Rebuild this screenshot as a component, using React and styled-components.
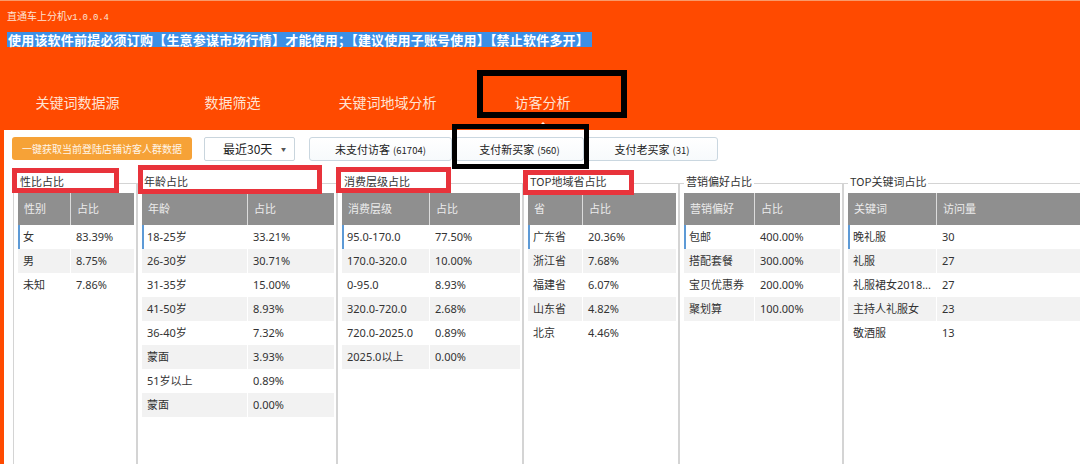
import React from "react";
import styled, { createGlobalStyle } from "styled-components";

const GlobalStyle = createGlobalStyle`
  html, body {
    margin: 0;
    padding: 0;
    overflow: hidden;
    background: #fff;
  }
  body {
    font-family: "Noto Sans", "Noto Sans CJK SC", sans-serif;
  }
`;

const panels = [
  {
    title: "性比占比", width: 124, first: 52, cols: ["性别", "占比"],
    rows: [["女", "83.39%"], ["男", "8.75%"], ["未知", "7.86%"]],
  },
  {
    title: "年龄占比", width: 200, first: 105, cols: ["年龄", "占比"],
    rows: [
      ["18-25岁", "33.21%"], ["26-30岁", "30.71%"], ["31-35岁", "15.00%"],
      ["41-50岁", "8.93%"], ["36-40岁", "7.32%"], ["蒙面", "3.93%"],
      ["51岁以上", "0.89%"], ["蒙面", "0.00%"],
    ],
  },
  {
    title: "消费层级占比", width: 186, first: 87, cols: ["消费层级", "占比"],
    rows: [
      ["95.0-170.0", "77.50%"], ["170.0-320.0", "10.00%"], ["0-95.0", "8.93%"],
      ["320.0-720.0", "2.68%"], ["720.0-2025.0", "0.89%"], ["2025.0以上", "0.00%"],
    ],
  },
  {
    title: "TOP地域省占比", width: 156, first: 54, cols: ["省", "占比"],
    rows: [["广东省", "20.36%"], ["浙江省", "7.68%"], ["福建省", "6.07%"], ["山东省", "4.82%"], ["北京", "4.46%"]],
  },
  {
    title: "营销偏好占比", width: 164, first: 70, cols: ["营销偏好", "占比"],
    rows: [["包邮", "400.00%"], ["搭配套餐", "300.00%"], ["宝贝优惠券", "200.00%"], ["聚划算", "100.00%"]],
  },
  {
    title: "TOP关键词占比", width: 250, first: 88, cols: ["关键词", "访问量"],
    rows: [["晚礼服", "30"], ["礼服", "27"], ["礼服裙女2018...", "27"], ["主持人礼服女", "23"], ["敬酒服", "13"]],
  },
];

const tabs = ["关键词数据源", "数据筛选", "关键词地域分析", "访客分析"];

const buyers = [
  { label: "未支付访客", count: "61704", width: 143, gap: 14 },
  { label: "支付新买家", count: "560", width: 129, gap: 3 },
  { label: "支付老买家", count: "31", width: 132, gap: 2 },
];

// highlight frames drawn over the window
const marks = [
  { color: "#e8333b", w: 5, x: 12, y: 168, width: 107, height: 25, fill: true },
  { color: "#e8333b", w: 5, x: 138, y: 165, width: 184, height: 29, fill: true },
  { color: "#e8333b", w: 5, x: 336, y: 167, width: 115, height: 26, fill: true },
  { color: "#e8333b", w: 5, x: 523, y: 170, width: 111, height: 25, fill: true },
  { color: "#000", w: 6, x: 477, y: 70, width: 150, height: 48 },
  { color: "#000", w: 5, x: 452, y: 124, width: 137, height: 45 },
];

function App() {
  return (
    <>
      <GlobalStyle />
      <Window>
        <Header>
          <AppTitle>
            直通车上分机<Version>v1.0.0.4</Version>
          </AppTitle>
          <NoticeLine>
            <Notice>使用该软件前提必须订购【生意参谋市场行情】才能使用；【建议使用子账号使用】【禁止软件多开】</Notice>
          </NoticeLine>
          <Tabs>
            {tabs.map((t, i) => (
              <Tab key={t} $active={i === 3}>{t}</Tab>
            ))}
          </Tabs>
        </Header>
        <Body>
          <Toolbar>
            <FetchButton>一键获取当前登陆店铺访客人群数据</FetchButton>
            <RangeSelect>
              最近30天<Caret>▼</Caret>
            </RangeSelect>
            {buyers.map((b) => (
              <BuyerButton key={b.label} $width={b.width} $gap={b.gap}>
                {b.label}<Count>({b.count})</Count>
              </BuyerButton>
            ))}
          </Toolbar>
          <Panels>
            {panels.map((p, i) => (
              <Group key={p.title} $width={p.width} $last={i === panels.length - 1}>
                <Legend>{p.title}</Legend>
                <Grid $first={p.first}>
                  {p.cols.map((c, j) => (
                    <HeadCell key={c} $divide={j > 0}>{c}</HeadCell>
                  ))}
                  {p.rows.map((r, ri) =>
                    r.map((v, j) => (
                      <Cell key={ri + "-" + j} $alt={ri % 2 === 1} $divide={j > 0} $current={ri === 0 && j === 0}>
                        {v}
                      </Cell>
                    ))
                  )}
                </Grid>
              </Group>
            ))}
          </Panels>
        </Body>
        {marks.map((m, i) => (
          <Mark
            key={i}
            $color={m.color}
            $w={m.w}
            $fill={m.fill}
            style={{ left: m.x, top: m.y, width: m.width, height: m.height }}
          />
        ))}
      </Window>
    </>
  );
}

const Window = styled.div`
  position: relative;
  width: 1080px;
  height: 464px;
  display: flex;
  flex-direction: column;
  overflow: hidden;
  background: #ff4a00;
`;

const Header = styled.div`
  height: 130px;
  box-sizing: border-box;
  border-top: 1px solid #f89a6a;
  padding-left: 7px;
  background: #ff4a00;
`;

const AppTitle = styled.div`
  margin-top: 8px;
  height: 14px;
  line-height: 14px;
  font-size: 10px;
  color: #fde3d4;
  font-family: "Noto Sans CJK SC", sans-serif;
`;

const Version = styled.span`
  font-family: "Liberation Mono", monospace;
  font-size: 9px;
  letter-spacing: -0.2px;
`;

const NoticeLine = styled.div`
  margin-top: 9px;
  height: 15px;
  line-height: 15px;
`;

const Notice = styled.span`
  display: inline-block;
  background: #3c8fe6;
  color: #fff;
  font-family: "Noto Sans CJK SC", sans-serif;
  font-weight: 700;
  font-size: 13px;
  letter-spacing: 0.2px;
  padding: 0 3px 0 1px;
`;

const Tabs = styled.div`
  display: flex;
  margin-top: 35px;
  margin-left: -7px;
`;

const Tab = styled.div`
  position: relative;
  width: 155px;
  height: 40px;
  line-height: 40px;
  text-align: center;
  font-family: "Noto Sans CJK SC", sans-serif;
  font-size: 14px;
  color: #ffe3d3;

  &::after {
    content: "";
    display: ${(p) => (p.$active ? "block" : "none")};
    position: absolute;
    left: 50%;
    bottom: -2px;
    margin-left: -2px;
    border: 2px solid transparent;
    border-bottom-color: #fff4ea;
  }
`;

const Body = styled.div`
  flex: 1;
  display: flex;
  flex-direction: column;
  margin-left: 4px;
  background: #fff;
  min-height: 0;
`;

const Toolbar = styled.div`
  display: flex;
  align-items: center;
  height: 23px;
  margin-top: 7px;
  padding-left: 8px;
`;

const FetchButton = styled.div`
  width: 180px;
  height: 23px;
  line-height: 23px;
  text-align: center;
  border-radius: 3px;
  background: #f6a237;
  color: #fff6ea;
  font-family: "Noto Sans CJK SC", sans-serif;
  font-size: 10px;
`;

const RangeSelect = styled.div`
  position: relative;
  box-sizing: border-box;
  width: 91px;
  height: 24px;
  line-height: 22px;
  margin-left: 12px;
  padding-left: 18px;
  border: 1px solid #c9d5dd;
  border-radius: 2px;
  background: #fff;
  color: #222;
  font-family: "Noto Sans CJK SC", sans-serif;
  font-size: 12px;
`;

const Caret = styled.span`
  position: absolute;
  right: 8px;
  top: 0;
  font-size: 5px;
  color: #555;
`;

const BuyerButton = styled.div`
  box-sizing: border-box;
  width: ${(p) => p.$width}px;
  height: 24px;
  line-height: 22px;
  margin-left: ${(p) => p.$gap}px;
  text-align: center;
  border: 1px solid #cad7e0;
  border-radius: 3px;
  background: linear-gradient(#ffffff, #f7fafc);
  color: #222;
  font-family: "Noto Sans CJK SC", sans-serif;
  font-size: 11px;
`;

const Count = styled.span`
  margin-left: 3px;
  font-size: 9.5px;
`;

const Panels = styled.div`
  flex: 1;
  display: flex;
  margin-top: 15px;
  padding-left: 9px;
  min-height: 0;
`;

const Group = styled.fieldset`
  flex: ${(p) => (p.$last ? "1 0 auto" : "0 0 auto")};
  width: ${(p) => p.$width}px;
  box-sizing: border-box;
  min-width: 0;
  margin: 0;
  padding: 1px 2px 0 4px;
  border: 1px solid #d4d4d4;
  border-bottom: none;
`;

const Legend = styled.legend`
  position: relative;
  top: -2px;
  z-index: 2;
  padding: 0 2px;
  margin-left: 0;
  height: 17px;
  line-height: 17px;
  font-family: "Noto Sans CJK SC", sans-serif;
  font-size: 11px;
  color: #333;
`;

const Grid = styled.div`
  display: grid;
  grid-template-columns: ${(p) => p.$first}px 1fr;
  grid-auto-rows: 24px;
  grid-template-rows: 32px;
  font-family: "Noto Sans", "Noto Sans CJK SC", sans-serif;
  font-size: 11px;
`;

const HeadCell = styled.div`
  line-height: 32px;
  padding-left: 6px;
  background: #8f8f8f;
  color: #ececec;
  border-left: ${(p) => (p.$divide ? "1px solid #dcdcdc" : "none")};
  white-space: nowrap;
  overflow: hidden;
`;

const Cell = styled.div`
  line-height: 24px;
  padding-left: 5px;
  color: #333;
  background: ${(p) => (p.$alt ? "#f2f2f2" : "#fff")};
  border-left: ${(p) => (p.$divide ? "1px solid #fff" : "none")};
  box-shadow: ${(p) => (p.$current ? "inset 2px 0 0 #5d9ad6" : "none")};
  white-space: nowrap;
`;

const Mark = styled.div`
  position: absolute;
  z-index: 1;
  box-sizing: border-box;
  border: ${(p) => p.$w}px solid ${(p) => p.$color};
  background: ${(p) => (p.$fill ? "#fff" : "transparent")};
`;

export default App;
